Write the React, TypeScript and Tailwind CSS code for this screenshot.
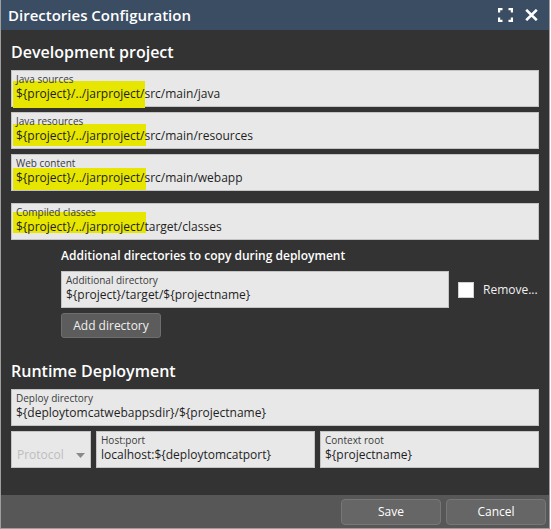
import React from "react";

type FieldProps = {
  label: string;
  highlight?: string;
  rest: string;
  mark?: string;
  className?: string;
};

function Field({ label, highlight, rest, mark, className = "" }: FieldProps) {
  return (
    <div
      className={`relative border border-[#c4c4c4] bg-[#e8e8e8] px-[4px] pt-[2px] pb-[3px] ${className}`}
    >
      {highlight && mark && <div className={`absolute bg-[#e6e600] ${mark}`} />}
      <div className="relative text-[10px] leading-[12px] text-[#3a3a3a]">{label}</div>
      <div className="relative text-[12px] leading-[18px] text-[#1e1e1e] whitespace-nowrap">
        {highlight}
        {rest}
      </div>
    </div>
  );
}

export default function App() {
  return (
    <div
      className="w-[550px] h-[529px] flex flex-col border-x border-b border-[#9e9e9e] bg-[#333333]"
      style={{ fontFamily: '"Open Sans", "Noto Sans", sans-serif' }}
    >
      {/* Title bar */}
      <div className="h-[30px] shrink-0 bg-[#3a4d63] flex items-center justify-between pl-[7px] pr-[11px]">
        <span className="text-[15px] font-semibold text-white leading-[20px]">
          Directories Configuration
        </span>
        <div className="flex items-center gap-[12px]">
          <svg width="15" height="14" viewBox="0 0 15 14" fill="none" stroke="white" strokeWidth="2.2">
            <path d="M1.1 4.5V1.1H4.5M10.5 1.1H13.9V4.5M13.9 9.5V12.9H10.5M4.5 12.9H1.1V9.5" />
          </svg>
          <svg width="13" height="12" viewBox="0 0 13 12" fill="none" stroke="white" strokeWidth="2.6">
            <path d="M1.2 0.8L11.8 11.2M11.8 0.8L1.2 11.2" />
          </svg>
        </div>
      </div>

      {/* Body */}
      <div className="flex-1 px-[10px] pt-[11px]">
        <h2 className="text-[16px] leading-[22px] font-semibold text-white">Development project</h2>

        <div className="mt-[7px] flex flex-col gap-[5px]">
          <Field
            label="Java sources"
            highlight="${project}/../jarproject/"
            rest="src/main/java"
            mark="left-[1px] w-[132px] top-[10px] h-[27px]"
          />
          <Field
            label="Java resources"
            highlight="${project}/../jarproject/"
            rest="src/main/resources"
            mark="left-[1px] w-[133px] top-[11px] h-[22px]"
          />
          <Field
            label="Web content"
            highlight="${project}/../jarproject/"
            rest="src/main/webapp"
            mark="left-[1px] w-[133px] top-[13px] h-[22px]"
          />
        </div>

        <Field
          className="mt-[12px]"
          label="Compiled classes"
          highlight="${project}/../jarproject/"
          rest="target/classes"
          mark="left-[1px] w-[133px] top-[8px] h-[21px]"
        />

        {/* Additional directories */}
        <div className="pl-[50px]">
          <h3 className="mt-[7px] text-[12px] leading-[18px] font-semibold text-white">
            Additional directories to copy during deployment
          </h3>
          <div className="mt-[6px] flex items-center">
            <Field
              className="w-[388px]"
              label="Additional directory"
              rest="${project}/target/${projectname}"
            />
            <div className="ml-[9px] w-[16px] h-[16px] bg-white border border-[#d0d0d0]" />
            <span className="ml-[9px] text-[12px] text-[#f0f0f0]">Remove...</span>
          </div>
          <button className="mt-[5px] w-[100px] h-[25px] rounded-[3px] bg-[#5c5c5c] border border-[#6e6e6e] text-[12px] text-[#f0f0f0] leading-[18px]">
            Add directory
          </button>
        </div>

        <h2 className="mt-[22px] text-[16px] leading-[22px] font-semibold text-white">
          Runtime Deployment
        </h2>
        <Field
          className="mt-[7px]"
          label="Deploy directory"
          rest="${deploytomcatwebappsdir}/${projectname}"
        />
        <div className="mt-[5px] flex gap-[5px]">
          <div className="w-[80px] shrink-0 border border-[#c4c4c4] bg-[#e8e8e8] pl-[5px] pr-[4px] pt-[14px] pb-[3px] flex items-center justify-between">
            <span className="text-[12px] leading-[18px] text-[#bdbdbd]">Protocol</span>
            <svg width="9" height="5" viewBox="0 0 9 5" className="mr-[1px] mt-[1px]">
              <path d="M0 0H9L4.5 5Z" fill="#8a8a8a" />
            </svg>
          </div>
          <Field className="flex-1" label="Host:port" rest="localhost:${deploytomcatport}" />
          <Field className="flex-1" label="Context root" rest="${projectname}" />
        </div>
      </div>

      {/* Footer */}
      <div className="h-[33px] shrink-0 bg-[#575757] flex items-center justify-end gap-[5px] pr-[3px]">
        <button className="w-[100px] h-[26px] rounded-[4px] bg-[#666666] border border-[#777777] text-[12px] text-white">
          Save
        </button>
        <button className="w-[100px] h-[26px] rounded-[4px] bg-[#666666] border border-[#777777] text-[12px] text-white">
          Cancel
        </button>
      </div>
    </div>
  );
}
